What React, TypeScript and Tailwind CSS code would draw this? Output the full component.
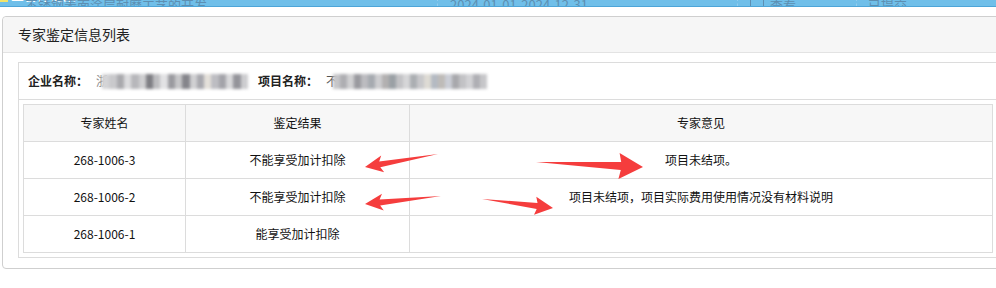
import React from 'react'

type Pt = [number, number]

// arrow polygon from tail to tip, computed at runtime
function arrowPoints(t: Pt, p: Pt, headLen: number, headHalf: number, shaftHalf: number, notch: number) {
  const dx = p[0] - t[0]
  const dy = p[1] - t[1]
  const len = Math.hypot(dx, dy)
  const ux = dx / len
  const uy = dy / len
  const nx = -uy
  const ny = ux
  const bx = p[0] - ux * headLen
  const by = p[1] - uy * headLen
  const pts: Pt[] = [
    t,
    [bx + nx * shaftHalf, by + ny * shaftHalf],
    [bx - ux * notch + nx * headHalf, by - uy * notch + ny * headHalf],
    p,
    [bx - ux * notch - nx * headHalf, by - uy * notch - ny * headHalf],
    [bx - nx * shaftHalf, by - ny * shaftHalf],
  ]
  return pts.map((q) => q[0].toFixed(1) + ',' + q[1].toFixed(1)).join(' ')
}

const arrows = [
  { t: [438, 154] as Pt, p: [365, 167] as Pt, hl: 15, hh: 8.5, sh: 3, n: 3 },
  { t: [441, 196] as Pt, p: [365, 204] as Pt, hl: 15, hh: 8.5, sh: 3, n: 3 },
  { t: [536, 162] as Pt, p: [643, 167] as Pt, hl: 22, hh: 13, sh: 4, n: 2 },
  { t: [482, 199] as Pt, p: [553, 208] as Pt, hl: 16, hh: 9, sh: 3, n: 2 },
]

const mosaicA = ['#d4d4d6', '#c9c9cc', '#a9a9ad', '#dcdcde', '#b7b7bb', '#cfcfd1', '#7e7e83', '#bdbdc0', '#e2e2e4', '#9a9a9f', '#c6c6c8', '#85858b', '#d0d0d2', '#a8a8ae', '#e4e0da', '#bdbdc2', '#a3a3a9', '#d8d8da', '#94949a', '#cdcdd0']
const mosaicB = ['#c6c6c9', '#aeaeb2', '#d0d0d2', '#9a9a9f', '#bcbcc0', '#a6aab0', '#cdcdd0', '#b2b0b0', '#9aa0a5', '#c2c2c5', '#d6d6d8', '#abaeb2', '#c8c8cb', '#dedbd4', '#b4bac2', '#bebbb8', '#cbced6', '#a8a8ac', '#c2c2c5', '#d2d2d5', '#afafb4', '#c6c6c9']

function Mosaic({ colors, width }: { colors: string[]; width: number }) {
  return (
    <div className="flex h-[15px] overflow-hidden blur-[1.5px]" style={{ width }}>
      {colors.map((c, i) => (
        <div key={i} className="h-full flex-1" style={{ backgroundColor: c }} />
      ))}
    </div>
  )
}

const rows = [
  { name: '268-1006-3', result: '不能享受加计扣除', opinion: '项目未结项。' },
  { name: '268-1006-2', result: '不能享受加计扣除', opinion: '项目未结项，项目实际费用使用情况没有材料说明' },
  { name: '268-1006-1', result: '能享受加计扣除', opinion: '' },
]

export default function App() {
  return (
    <div
      className="relative w-[996px] h-[288px] overflow-hidden bg-white text-[#222]"
      style={{ fontFamily: '"Noto Sans CJK SC", "Noto Sans", "Liberation Sans", sans-serif' }}
    >
      {/* cut-off strip of the list above */}
      <div className="h-[7px] overflow-hidden bg-[#70bfe9] border-b border-[#4da5d8] flex flex-col">
        <div className="flex items-end h-[14px] -mt-[12px] shrink-0">
          <div className="w-[8px] h-[14px] bg-[#f3e46a]" />
          <span className="ml-[3px] text-[13px] leading-[14px] font-bold text-white">三合作框架</span>
        </div>
        <div className="flex h-[14px] -mt-[4px] shrink-0 text-[13px] leading-[14px] text-[#5d8fb2]">
          <div className="w-[438px] pl-[25px] border-r border-dashed border-[#93cdee]">不锈钢表面涂层耐磨工艺的开发</div>
          <div className="w-[300px] pl-[12px] border-r border-dashed border-[#93cdee]">2024-01-01-2024-12-31</div>
          <div className="w-[119px] pl-[12px] flex items-end gap-[6px] border-r border-dashed border-[#93cdee]">
            <span className="w-[14px] h-[14px] border border-[#5d8fb2] rounded-[2px]" />
            查看
          </div>
          <div className="pl-[11px]">已提交</div>
        </div>
      </div>

      {/* panel */}
      <div className="ml-[2px] mt-[9px] w-[1010px] border border-[#cfcfcf] rounded-[4px]">
        <div className="h-[36px] bg-[#f6f6f6] border-b border-[#e3e3e3] rounded-t-[4px] flex items-center pl-[15px] text-[14px] text-[#222]">
          专家鉴定信息列表
        </div>
        <div className="pl-[15px] pt-[9px] pb-[10px]">
          <div className="w-[990px] border border-[#dcdcdc] px-[4px] pb-[4px]">
            <div className="h-[37px] -mx-[4px] px-[9px] border-b border-[#dcdcdc] flex items-center text-[12px] font-bold">
              <span>企业名称：</span>
              <span className="ml-[8px] font-normal text-[#888]">浙</span>
              <div className="-ml-[6px]">
                <Mosaic colors={mosaicA} width={146} />
              </div>
              <span className="ml-[10px]">项目名称：</span>
              <span className="ml-[8px] font-normal text-[#555]">不</span>
              <div className="-ml-[5px]">
                <Mosaic colors={mosaicB} width={154} />
              </div>
            </div>
            <table className="mt-[4px] w-[970px] border-collapse text-[12px] text-center text-[#111]">
              <thead>
                <tr className="h-[37px] bg-[#f7f7f7]">
                  <th className="w-[162px] border border-[#dcdcdc] font-normal">专家姓名</th>
                  <th className="w-[224px] border border-[#dcdcdc] font-normal">鉴定结果</th>
                  <th className="border border-[#dcdcdc] font-normal">专家意见</th>
                </tr>
              </thead>
              <tbody>
                {rows.map((r) => (
                  <tr key={r.name} className="h-[37px]">
                    <td className="border border-[#dcdcdc]">{r.name}</td>
                    <td className="border border-[#dcdcdc]">{r.result}</td>
                    <td className="border border-[#dcdcdc]">{r.opinion}</td>
                  </tr>
                ))}
              </tbody>
            </table>
          </div>
        </div>
      </div>

      {/* red annotation arrows drawn over the table */}
      <svg className="absolute left-0 top-0 pointer-events-none" width="996" height="288">
        {arrows.map((a, i) => (
          <polygon key={i} points={arrowPoints(a.t, a.p, a.hl, a.hh, a.sh, a.n)} fill="#f53d3d" />
        ))}
      </svg>
    </div>
  )
}
